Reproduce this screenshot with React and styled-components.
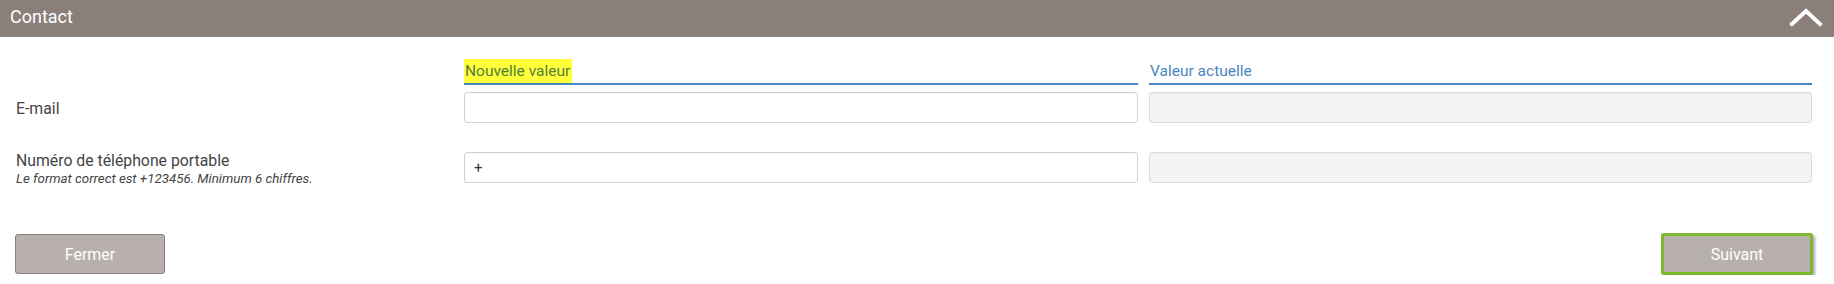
import { createGlobalStyle, styled } from "styled-components";

const GlobalStyle = createGlobalStyle`
  html, body {
    margin: 0;
    padding: 0;
    background: #ffffff;
    font-family: Roboto, "Liberation Sans", Arial, sans-serif;
  }
`;

const Panel = styled.section`
  width: 1834px;
  background: #fff;
`;

const Header = styled.div`
  height: 37px;
  background: #8a7f79;
  display: flex;
  align-items: center;
  justify-content: space-between;
  padding: 0 11px 0 10px;
  box-sizing: border-box;
`;

const Title = styled.h2`
  margin: 0;
  font-size: 18px;
  font-weight: 400;
  color: #fff;
  line-height: 1;
  padding-bottom: 4px;
`;

const Toggle = styled.button`
  border: 0;
  background: none;
  padding: 0;
  display: flex;
  cursor: pointer;
  margin-top: -3px;
`;

const Grid = styled.div`
  display: grid;
  grid-template-columns: 437px 674px 1fr;
  column-gap: 11px;
  padding: 22px 22px 0 16px;
  align-items: start;
`;

const ColHead = styled.div`
  border-bottom: 2px solid #4a86c0;
  height: 24px;
  display: flex;
  align-items: stretch;
`;

const ColLabel = styled.span`
  font-size: 15.5px;
  line-height: 24px;
  padding: 0 2px 0 1px;
  color: ${(p) => (p.$marked ? "#50803a" : "#4a86c0")};
  background: ${(p) => (p.$marked ? "#ffff3a" : "transparent")};
`;

const FieldLabel = styled.div`
  font-size: 15.8px;
  color: #444;
  line-height: 19px;
  padding-top: ${(p) => p.$top || 0}px;
`;

const Hint = styled.div`
  font-size: 13.3px;
  font-style: italic;
  color: #444;
  line-height: 15px;
  margin-top: 1px;
`;

const Input = styled.input`
  display: block;
  width: 100%;
  height: 31px;
  box-sizing: border-box;
  border: 1px solid ${(p) => (p.disabled ? "#dcdcdc" : "#d2d2d2")};
  border-radius: 3px;
  background: ${(p) => (p.disabled ? "#f4f4f4" : "#fff")};
  box-shadow: inset 0 1px 1px rgba(0, 0, 0, 0.04);
  padding: 0 9px;
  font-family: Roboto, "Liberation Sans", Arial, sans-serif;
  font-size: 15px;
  color: #333;
  outline: none;
`;

const Cell = styled.div`
  margin-top: ${(p) => p.$mt || 0}px;
`;

const Actions = styled.div`
  display: flex;
  justify-content: space-between;
  align-items: center;
  padding: 47px 21px 0 15px;
`;

const Button = styled.button`
  width: ${(p) => (p.$focused ? "152px" : "150px")};
  height: ${(p) => (p.$focused ? "42px" : "40px")};
  box-sizing: border-box;
  background: #b8b0ac;
  border: ${(p) => (p.$focused ? "3px solid #7cb82c" : "1px solid #8a7f79")};
  border-radius: 3px;
  color: #fff;
  font-family: Roboto, "Liberation Sans", Arial, sans-serif;
  font-size: 16px;
  cursor: pointer;
  box-shadow: ${(p) => (p.$focused ? "2px 2px 3px rgba(0,0,0,0.35)" : "none")};
`;

function ChevronUp() {
  return (
    <svg width="34" height="22" viewBox="0 0 34 22">
      <path d="M3 18 L17 5 L31 18" fill="none" stroke="#fff" strokeWidth="4" strokeLinecap="square" />
    </svg>
  );
}

export default function App() {
  return (
    <>
      <GlobalStyle />
      <Panel>
        <Header>
          <Title>Contact</Title>
          <Toggle aria-label="Réduire">
            <ChevronUp />
          </Toggle>
        </Header>
        <Grid>
          <div />
          <ColHead>
            <ColLabel $marked>Nouvelle valeur</ColLabel>
          </ColHead>
          <ColHead>
            <ColLabel>Valeur actuelle</ColLabel>
          </ColHead>

          <FieldLabel $top={14}>E-mail</FieldLabel>
          <Cell $mt={7}>
            <Input type="email" defaultValue="" />
          </Cell>
          <Cell $mt={7}>
            <Input disabled />
          </Cell>

          <Cell $mt={28}>
            <FieldLabel>Numéro de téléphone portable</FieldLabel>
            <Hint>Le format correct est +123456. Minimum 6 chiffres.</Hint>
          </Cell>
          <Cell $mt={29}>
            <Input type="tel" defaultValue="+" />
          </Cell>
          <Cell $mt={29}>
            <Input disabled />
          </Cell>
        </Grid>
        <Actions>
          <Button>Fermer</Button>
          <Button $focused>Suivant</Button>
        </Actions>
      </Panel>
    </>
  );
}
